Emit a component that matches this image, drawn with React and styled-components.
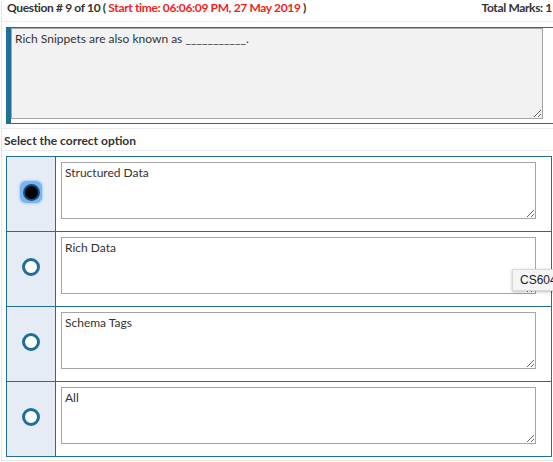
import React from "react"
import styled, { createGlobalStyle } from "styled-components"

const Global = createGlobalStyle`
  html, body {
    margin: 0;
    overflow: hidden;
    background: #fff;
  }
  body {
    font-family: Lato, "Open Sans", sans-serif;
    color: #333;
  }
`

const Page = styled.div`
  position: relative;
  margin-left: 1px;
  width: 570px;
  height: 460px;
  border-left: 1px solid #e6e6e6;
  border-bottom: 1px solid #e6e6e6;
`

const Header = styled.div`
  display: flex;
  justify-content: space-between;
  height: 21px;
  padding: 0 20px 0 5px;
  font-size: 12px;
  font-weight: bold;
  letter-spacing: -0.35px;
  line-height: 16px;
  border-bottom: 1px solid #ececec;
  white-space: nowrap;
`

const Red = styled.span`
  color: #f01e1e;
`

const QuestionBox = styled.div`
  margin: 5px 0 0 4px;
  width: 537px;
  padding: 0 5px 4px 0;
  border: 1px solid #226f96;
  border-left-width: 5px;
`

const Area = styled.textarea`
  display: block;
  box-sizing: border-box;
  margin: 0;
  width: ${p => p.$w}px;
  height: ${p => p.$h}px;
  padding: 2px 3px;
  border: 1px solid #a6a6a6;
  background: ${p => (p.$grey ? "#f2f2f2" : "#fff")};
  font-family: Lato, "Open Sans", sans-serif;
  font-size: 12px;
  line-height: 15px;
  color: #333;
  resize: both;
  outline: none;
`

const Divider = styled.div`
  margin-top: 4px;
  border-top: 1px solid #ececec;
`

const SectionTitle = styled.div`
  height: 18px;
  padding: 3px 0 0 2px;
  font-size: 12px;
  font-weight: bold;
  line-height: 18px;
  border-bottom: 1px solid #ececec;
`

const Options = styled.div`
  margin: 5px 0 0 4px;
  width: 544px;
  border: 1px solid #226f96;
`

const Row = styled.div`
  display: flex;
  height: 74px;
  & + & {
    border-top: 1px solid #226f96;
  }
`

const RadioCell = styled.div`
  display: flex;
  align-items: center;
  justify-content: center;
  width: 49px;
  padding-bottom: 4px;
  box-sizing: border-box;
  background: #e5ecf6;
  border-right: 1px solid #226f96;
`

const RadioHolder = styled.span`
  position: relative;
  z-index: 0;
  display: flex;
`

const Radio = styled.span`
  position: relative;
  box-sizing: border-box;
  width: ${p => (p.$checked ? 17 : 18)}px;
  height: ${p => (p.$checked ? 17 : 18)}px;
  border-radius: 50%;
  border: ${p => (p.$checked ? "2.5px solid #174f78" : "3.5px solid #1f6f98")};
  background: ${p => (p.$checked ? "#000" : "#fff")};

  &::before {
    content: "";
    display: ${p => (p.$checked ? "block" : "none")};
    position: absolute;
    left: -5px;
    top: -5px;
    width: 22px;
    height: 22px;
    border-radius: 6px;
    background: #78b4f4;
    box-shadow: 0 0 2px 1px #a9d0fa;
    z-index: -1;
  }
`

const AnswerCell = styled.div`
  padding: 5px 0 0 5px;
`

const Tooltip = styled.div`
  position: absolute;
  left: 510px;
  top: 269px;
  height: 20px;
  padding: 0 8px 0 7px;
  background: #f5f5f5;
  border: 1px solid #d8d8d8;
  box-shadow: 0 1px 3px rgba(0, 0, 0, 0.25);
  font-family: "Liberation Sans", Arial, sans-serif;
  font-size: 12px;
  line-height: 20px;
  color: #222;
`

const answers = ["Structured Data", "Rich Data", "Schema Tags", "All"]

export default function App() {
  return (
    <Page>
      <Global />
      <Header>
        <span>
          Question # 9 of 10 ( <Red>Start time: 06:06:09 PM, 27 May 2019</Red> )
        </span>
        <span>Total Marks: 1</span>
      </Header>
      <QuestionBox>
        <Area $grey $w={532} $h={91} readOnly defaultValue="Rich Snippets are also known as ___________." />
      </QuestionBox>
      <Divider />
      <SectionTitle>Select the correct option</SectionTitle>
      <Options>
        {answers.map((a, i) => (
          <Row key={a}>
            <RadioCell>
              <RadioHolder>
                <Radio $checked={i === 0} />
              </RadioHolder>
            </RadioCell>
            <AnswerCell>
              <Area $w={475} $h={57} readOnly defaultValue={a} />
            </AnswerCell>
          </Row>
        ))}
      </Options>
      <Tooltip>CS604</Tooltip>
    </Page>
  )
}
